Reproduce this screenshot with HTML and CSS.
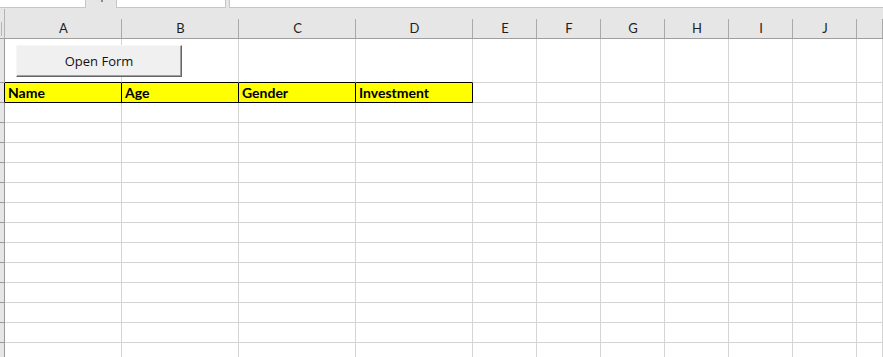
FILE: index.html
```html
<!DOCTYPE html>
<html lang="en">

<head>
    <meta charset="UTF-8">
    <title>Sheet1</title>
    <link rel="stylesheet" href="styles.css">
</head>

<body>
    <div class="topbar">
        <div class="box name-box"></div>
        <div class="sep"><span class="dots"></span></div>
        <div class="box fx-box"></div>
        <div class="box formula-box"></div>
    </div>

    <div class="sheet-wrap">
        <button class="open-form">Open Form</button>
        <table class="sheet">
            <colgroup>
                <col class="c-head">
                <col class="c-wide"><col class="c-wide"><col class="c-wide"><col class="c-wide">
                <col class="c-std"><col class="c-std"><col class="c-std"><col class="c-std"><col class="c-std"><col class="c-std">
                <col>
            </colgroup>
            <thead>
                <tr>
                    <th class="corner"></th>
                    <th>A</th><th>B</th><th>C</th><th>D</th><th>E</th><th>F</th><th>G</th><th>H</th><th>I</th><th>J</th><th></th>
                </tr>
            </thead>
            <tbody>
                <tr class="row-tall">
                    <th></th>
                    <td class="above"></td><td class="above"></td><td class="above"></td><td class="above"></td><td></td><td></td><td></td><td></td><td></td><td></td><td></td>
                </tr>
                <tr class="titles">
                    <th class="dark"></th>
                    <td class="hl">Name</td><td class="hl">Age</td><td class="hl">Gender</td><td class="hl">Investment</td><td></td><td></td><td></td><td></td><td></td><td></td><td></td>
                </tr>
                <tr><th></th><td></td><td></td><td></td><td></td><td></td><td></td><td></td><td></td><td></td><td></td><td></td></tr>
                <tr><th></th><td></td><td></td><td></td><td></td><td></td><td></td><td></td><td></td><td></td><td></td><td></td></tr>
                <tr><th></th><td></td><td></td><td></td><td></td><td></td><td></td><td></td><td></td><td></td><td></td><td></td></tr>
                <tr><th></th><td></td><td></td><td></td><td></td><td></td><td></td><td></td><td></td><td></td><td></td><td></td></tr>
                <tr><th></th><td></td><td></td><td></td><td></td><td></td><td></td><td></td><td></td><td></td><td></td><td></td></tr>
                <tr><th></th><td></td><td></td><td></td><td></td><td></td><td></td><td></td><td></td><td></td><td></td><td></td></tr>
                <tr><th></th><td></td><td></td><td></td><td></td><td></td><td></td><td></td><td></td><td></td><td></td><td></td></tr>
                <tr><th></th><td></td><td></td><td></td><td></td><td></td><td></td><td></td><td></td><td></td><td></td><td></td></tr>
                <tr><th></th><td></td><td></td><td></td><td></td><td></td><td></td><td></td><td></td><td></td><td></td><td></td></tr>
                <tr><th></th><td></td><td></td><td></td><td></td><td></td><td></td><td></td><td></td><td></td><td></td><td></td></tr>
                <tr><th></th><td></td><td></td><td></td><td></td><td></td><td></td><td></td><td></td><td></td><td></td><td></td></tr>
                <tr><th></th><td></td><td></td><td></td><td></td><td></td><td></td><td></td><td></td><td></td><td></td><td></td></tr>
                <tr><th></th><td></td><td></td><td></td><td></td><td></td><td></td><td></td><td></td><td></td><td></td><td></td></tr>
            </tbody>
        </table>
    </div>
</body>

</html>
```

FILE: styles.css
```css
* {
    box-sizing: border-box;
}

body {
    margin: 0;
    width: 883px;
    height: 357px;
    overflow: hidden;
    background: #ffffff;
    font-family: "Lato", "Liberation Sans", sans-serif;
}

/* formula bar strip, cut off at the top */
.topbar {
    display: flex;
    height: 9px;
    background: #e6e6e6;
}

.topbar .box {
    height: 8px;
    background: #ffffff;
    border: 1px solid #c6c6c6;
    border-top: none;
}

.name-box {
    width: 86px;
    border-left: none !important;
}

.sep {
    width: 30px;
    display: flex;
    justify-content: center;
}

.sep .dots {
    width: 2px;
    height: 2px;
    margin-left: 2px;
    background: #8a8a8a;
}

.fx-box {
    width: 110px;
}

.formula-box {
    flex: 1;
    margin-left: 3px;
    border-right: none !important;
}

.sheet-wrap {
    position: relative;
}

.sheet {
    width: 100%;
    table-layout: fixed;
    border-collapse: separate;
    border-spacing: 0;
}

.c-head {
    width: 5px;
}

.c-wide {
    width: 117px;
}

.c-std {
    width: 64px;
}

.sheet th,
.sheet td {
    padding: 0;
    height: 20px;
    border-right: 1px solid #d4d4d4;
    border-bottom: 1px solid #d4d4d4;
}

.sheet thead th {
    height: 30px;
    padding-top: 8px;
    background: #e6e6e6 linear-gradient(#a9a9a9, #a9a9a9) right bottom / 1px 19px no-repeat;
    border-right: none;
    border-bottom: 1px solid #9e9e9e;
    font-family: "Lato", "Open Sans", sans-serif;
    font-weight: 400;
    font-size: 13px;
    color: #1e1e1e;
    text-align: center;
}

.sheet thead th.corner {
    background: #e6e6e6 linear-gradient(#b4b4b4, #b4b4b4) 1px 13px / 1px 14px no-repeat;
    border-right: 1px solid #b4b4b4;
}

.sheet tbody th {
    background: #e6e6e6;
    border-right: 1px solid #9b9b9b;
    border-bottom: 1px solid #9b9b9b;
}

.sheet tbody th.dark {
    border-right-color: #000000;
}

.row-tall td,
.row-tall th {
    height: 44px;
}

.row-tall td.above {
    border-bottom-color: #000000;
}

.sheet td.hl {
    background: #ffff00;
    border-right-color: #000000;
    border-bottom-color: #000000;
    padding: 0 0 0 3px;
    font-weight: 700;
    font-size: 14px;
    color: #000000;
    line-height: 18px;
    white-space: nowrap;
    overflow: hidden;
}

/* ActiveX style command button floating over row 1 */
.open-form {
    position: absolute;
    left: 16px;
    top: 36px;
    width: 166px;
    height: 32px;
    padding: 0;
    background: #f0f0f0;
    border: 1px solid;
    border-color: #f7f7f7 #646464 #646464 #f7f7f7;
    box-shadow: inset -1px -1px 0 #a0a0a0;
    font-family: "Open Sans", "Noto Sans", sans-serif;
    font-size: 13px;
    color: #111111;
}
```
